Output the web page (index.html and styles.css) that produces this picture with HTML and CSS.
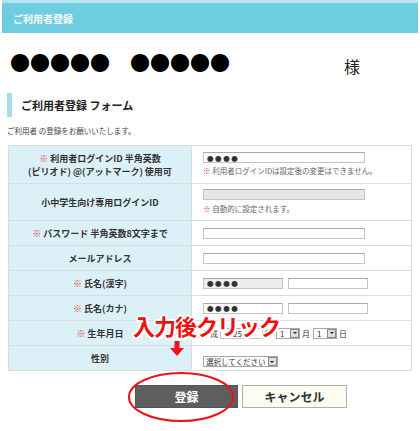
FILE: index.html
```html
<!DOCTYPE html>
<html lang="ja">
<head>
<meta charset="utf-8">
<title>ご利用者登録</title>
<link rel="stylesheet" href="styles.css">
</head>
<body>
<div class="page">
  <header class="topbar">ご利用者登録</header>
  <div class="name-row"><span class="name">●●●●●　●●●●●</span><span class="sama">様</span></div>
  <h2 class="section-title">ご利用者登録 フォーム</h2>
  <p class="lead">ご利用者 の登録をお願いいたします。</p>
  <table class="form">
    <tr class="r-tall">
      <th><span class="req">※</span> 利用者ログインID 半角英数<br>(ピリオド) @(アットマーク) 使用可</th>
      <td><input class="in long dots" type="text" value="●●●●"><p class="note"><span class="req">※</span> 利用者ログインIDは設定後の変更はできません。</p></td>
    </tr>
    <tr class="r-tall2">
      <th>小中学生向け専用ログインID</th>
      <td><input class="in long gray" type="text" value=""><p class="note n2"><span class="req">※</span> 自動的に設定されます。</p></td>
    </tr>
    <tr>
      <th><span class="req">※</span> パスワード 半角英数8文字まで</th>
      <td><input class="in long" type="text" value=""></td>
    </tr>
    <tr>
      <th>メールアドレス</th>
      <td><input class="in long" type="text" value=""></td>
    </tr>
    <tr>
      <th><span class="req">※</span> 氏名(漢字)</th>
      <td><div class="pair"><input class="in half gray2 dots" type="text" value="●●●●"><input class="in half" type="text" value=""></div></td>
    </tr>
    <tr>
      <th><span class="req">※</span> 氏名(カナ)</th>
      <td><div class="pair"><input class="in half dots" type="text" value="●●●●"><input class="in half" type="text" value=""></div></td>
    </tr>
    <tr>
      <th><span class="req">※</span> 生年月日</th>
      <td><div class="birth"><span class="era">平成</span><input class="in year" type="text" value="25"><span class="unit y">年</span><span class="sel s-num"><span class="sel-text">1</span><span class="arr"></span></span><span class="unit">月</span><span class="sel s-num"><span class="sel-text">1</span><span class="arr"></span></span><span class="unit">日</span></div></td>
    </tr>
    <tr>
      <th>性別</th>
      <td><span class="sel s-gender"><span class="sel-text">選択してください</span><span class="arr"></span></span></td>
    </tr>
  </table>
  <div class="buttons">
    <button class="btn primary" type="button">登録</button>
    <button class="btn cancel" type="button">キャンセル</button>
  </div>
  <svg class="ellipse" width="108" height="52" viewBox="0 0 108 52"><ellipse cx="54" cy="26" rx="52" ry="24" fill="none" stroke="#e8131b" stroke-width="2"/></svg>
  <div class="callout">入力後クリック</div>
  <svg class="arrow" width="16" height="16" viewBox="0 0 16 16"><path d="M5.5 0 H10.5 V7 H15 L8 15 L1 7 H5.5 Z" fill="#e8131b"/></svg>
</div>
</body>
</html>
```

FILE: styles.css
```css
html, body {
  margin: 0;
  padding: 0;
  background: #ffffff;
}

body {
  font-family: "Noto Sans CJK JP", "Noto Sans", sans-serif;
  color: #333333;
}

.page {
  position: relative;
  width: 420px;
  height: 431px;
  overflow: hidden;
}

.topbar {
  margin: 0 2px;
  height: 30px;
  border-top: 3px solid #b7e4ef;
  background: #6ecde1;
  color: #ffffff;
  font-size: 10px;
  font-weight: bold;
  display: flex;
  align-items: center;
  padding-left: 11px;
}

.name-row {
  display: flex;
  align-items: center;
  height: 20px;
  margin-top: 20px;
  padding-left: 10px;
  color: #000000;
}

.name {
  font-size: 20px;
  line-height: 20px;
}

.sama {
  margin-left: auto;
  margin-right: 60px;
  font-size: 16px;
  line-height: 20px;
  color: #222222;
  margin-top: 5px;
}

.section-title {
  margin: 20px 0 0 7px;
  height: 24px;
  line-height: 24px;
  border-left: 5px solid #a9dcea;
  padding-left: 9px;
  font-size: 11px;
  font-weight: bold;
  color: #222222;
}

.lead {
  margin: 9px 0 0 7px;
  font-size: 7.5px;
  line-height: 10px;
  color: #444444;
}

.form {
  margin: 9px 0 0 8px;
  width: 404px;
  border-collapse: collapse;
  border: 1px solid #dddddd;
}

.form tr {
  height: 25px;
}

.form tr.r-tall {
  height: 38px;
}

.form tr.r-tall2 {
  height: 37px;
}

.form th,
.form td {
  border: 1px solid #dcdcdc;
  padding: 0;
  vertical-align: middle;
}

.form th {
  width: 182px;
  background: #dcf0f8;
  text-align: center;
  font-size: 9px;
  font-weight: bold;
  line-height: 13px;
  color: #333333;
}

.form td {
  padding-left: 11px;
  background: #ffffff;
}

.req {
  color: #e8383d;
}

.in {
  display: block;
  box-sizing: border-box;
  height: 11px;
  margin: 0;
  padding: 0 2px;
  border: 1px solid #c4c4c4;
  border-top-color: #a9a9a9;
  background: #ffffff;
  font-family: "Noto Sans CJK JP", sans-serif;
  font-size: 8px;
  line-height: 9px;
  color: #333333;
  outline: none;
}

.in.dots {
  font-size: 6.5px;
  letter-spacing: 1.6px;
  padding-left: 3px;
}

.in.long {
  width: 162px;
}

.in.half {
  width: 80px;
}

.in.gray {
  background: #e6e6e2;
}

.in.gray2 {
  background: #eeeeea;
}

.pair {
  display: flex;
  gap: 5px;
}

.note {
  margin: 2px 0 0 0;
  font-size: 7.5px;
  line-height: 12px;
  color: #666666;
}

.note.n2 {
  margin-top: 3px;
}

.birth {
  display: flex;
  align-items: center;
  font-size: 8px;
  color: #333333;
}

.era {
  width: 17px;
  font-size: 7.5px;
}

.in.year {
  display: inline-block;
  width: 43px;
  padding-left: 12px;
}

.unit {
  margin: 0 3px 0 2px;
}

.unit.y {
  margin: 0 4px 0 1px;
}

.sel {
  display: inline-flex;
  align-items: center;
  box-sizing: border-box;
  height: 11px;
  border: 1px solid #a8a8a8;
  background: #ffffff;
  font-size: 8px;
  line-height: 9px;
  color: #333333;
  padding-left: 3px;
}

.s-num {
  width: 24px;
}

.s-num .sel-text {
  flex: 1;
}

.s-gender {
  font-size: 7.5px;
  padding-left: 2px;
}

.arr {
  position: relative;
  box-sizing: border-box;
  width: 9px;
  height: 9px;
  background: #dedede;
  border: 1px solid #8a8a8a;
  margin-left: 2px;
}

.arr::after {
  content: "";
  position: absolute;
  left: 1.5px;
  top: 2.5px;
  border-left: 2px solid transparent;
  border-right: 2px solid transparent;
  border-top: 2px solid #222222;
}

.buttons {
  display: flex;
  gap: 4px;
  margin: 14px 0 0 135px;
}

.btn {
  box-sizing: border-box;
  height: 23px;
  margin: 0;
  padding: 0;
  font-family: "Noto Sans CJK JP", sans-serif;
  font-size: 12px;
  font-weight: bold;
  cursor: pointer;
}

.btn.primary {
  width: 103px;
  background: #5e5e5e;
  border: 1px solid #555555;
  color: #ffffff;
}

.btn.cancel {
  width: 105px;
  background: #fcfcf1;
  border: 1px solid #b0b0b0;
  color: #333333;
}

.ellipse {
  position: absolute;
  left: 127px;
  top: 371px;
}

.callout {
  position: absolute;
  left: 133px;
  top: 313px;
  font-size: 22px;
  line-height: 24px;
  font-weight: bold;
  letter-spacing: -1px;
  color: #ee1111;
  text-shadow:
    2px 0 0 #fff, -2px 0 0 #fff, 0 2px 0 #fff, 0 -2px 0 #fff,
    1.5px 1.5px 0 #fff, -1.5px 1.5px 0 #fff, 1.5px -1.5px 0 #fff, -1.5px -1.5px 0 #fff;
}

.arrow {
  position: absolute;
  left: 169px;
  top: 341px;
}
```
